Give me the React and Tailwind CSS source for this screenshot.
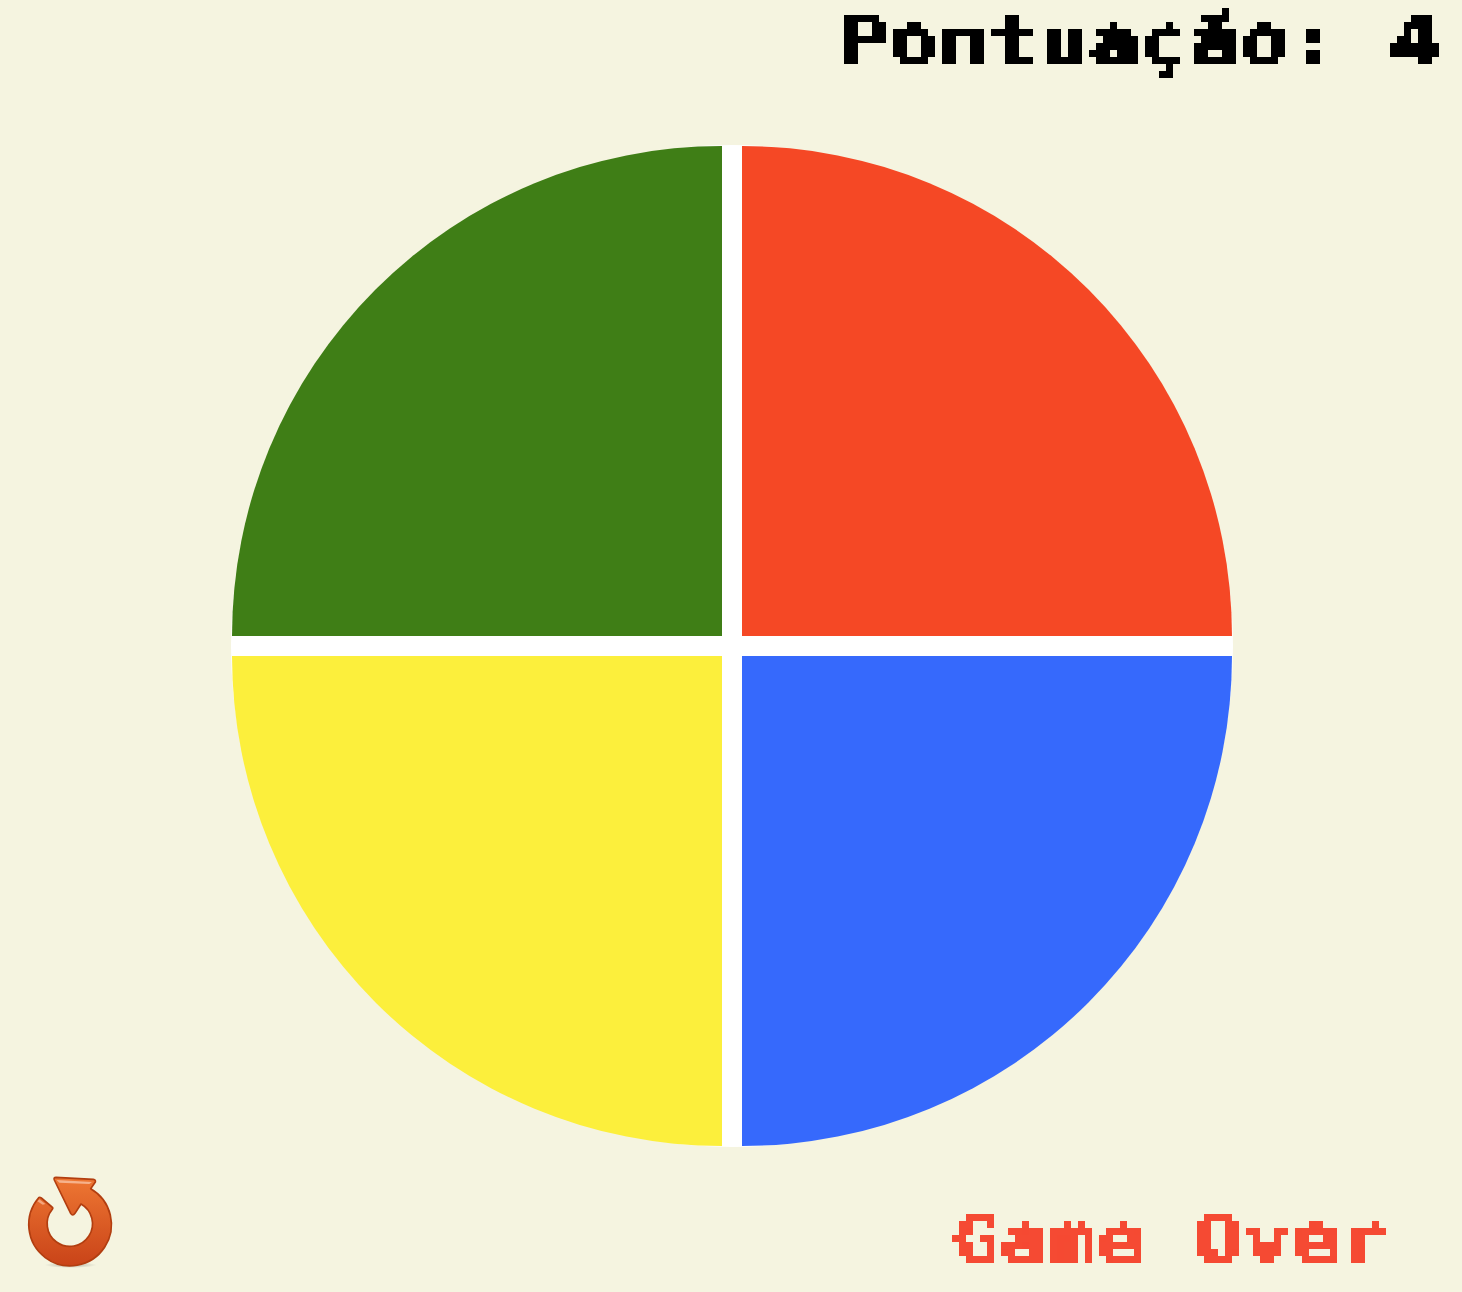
import React from "react";

function PixelFilter() {
  return (
    <svg width="0" height="0" className="absolute">
      <defs>
        <filter id="pixel" x="-40%" y="-20%" width="180%" height="140%" colorInterpolationFilters="sRGB">
          <feFlood x="3" y="3" width="1" height="1" floodColor="#000" />
          <feComposite width="7" height="7" />
          <feTile result="grid" />
          <feComposite in="SourceGraphic" in2="grid" operator="in" />
          <feComponentTransfer result="hard">
            <feFuncA type="discrete" tableValues="0 0 1 1" />
          </feComponentTransfer>
          <feMorphology in="hard" operator="dilate" radius="3" />
        </filter>
      </defs>
    </svg>
  );
}

function RestartIcon() {
  return (
    <svg viewBox="0 0 420 396" className="w-[140px] h-[132px]">
      <defs>
        <linearGradient id="ring" x1="0" y1="0" x2="0" y2="1">
          <stop offset="0" stopColor="#ee7733" />
          <stop offset="1" stopColor="#c94318" />
        </linearGradient>
        <radialGradient id="shade">
          <stop offset="0" stopColor="#000" stopOpacity="0.28" />
          <stop offset="1" stopColor="#000" stopOpacity="0" />
        </radialGradient>
      </defs>
      <ellipse cx="212" cy="315" rx="78" ry="9" fill="url(#shade)" />
      <path
        d="M116 113 A124 124 0 1 0 272 86 L286 66 Q288 59 280 58 L168 52 Q160 52 163 60 L212 160 Q218 170 225 160 L243 132 A68 68 0 1 1 157 148 Q160 144 156 141 L124 114 Q119 110 116 113 Z"
        fill="url(#ring)"
        stroke="#b23e10"
        strokeWidth="5"
        strokeLinejoin="round"
      />
      <path d="M170 60 L276 66 L268 72 L178 68 Z" fill="#f6b28c" />
      <path d="M118 118 L136 132 L128 134 L112 124 Z" fill="#f4a57d" />
    </svg>
  );
}

const pixelBox = "[filter:url(#pixel)]";
const pixelText =
  "inline-block origin-right font-['DejaVu_Sans_Mono',monospace] font-bold text-[65px] leading-none tracking-[0px] whitespace-pre [-webkit-text-stroke:1.5px_currentColor]";

export default function App() {
  return (
    <div className="w-[1462px] h-[1292px] overflow-hidden bg-[#f5f4e0] flex flex-col">
      <PixelFilter />
      <div className="h-[145px] flex justify-end pr-[22px] pt-[8px]">
        <h1 className={`${pixelBox} h-[80px] text-black`}>
          <span className={`${pixelText} scale-x-[1.28]`}>Pontuação: 4</span>
        </h1>
      </div>
      <div className="flex justify-center pl-px">
        <div className="w-[1002px] h-[1002px] rounded-full bg-white p-px grid grid-cols-[490px_490px] grid-rows-[490px_490px] gap-[20px]">
          <div className="bg-[#3f7e16] rounded-tl-[490px]" />
          <div className="bg-[#f54825] rounded-tr-[490px]" />
          <div className="bg-[#fcef3c] rounded-bl-[490px]" />
          <div className="bg-[#3669fc] rounded-br-[490px]" />
        </div>
      </div>
      <div className="flex justify-between items-start">
        <div className="mt-[13px]">
          <RestartIcon />
        </div>
        <p className={`${pixelBox} mt-[60px] mr-[74px] h-[70px] text-[#f54a33]`}>
          <span className={`${pixelText} scale-x-[1.24]`}>Game Over</span>
        </p>
      </div>
    </div>
  );
}
